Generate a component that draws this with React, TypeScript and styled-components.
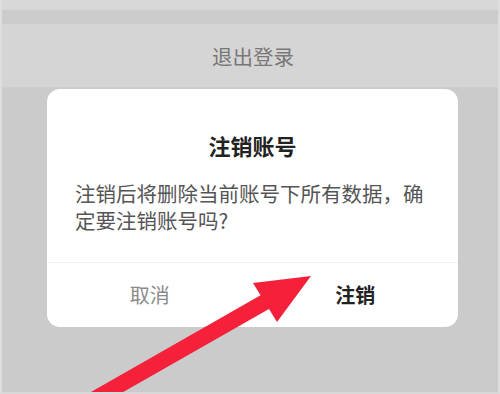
import React from "react";
import styled, { createGlobalStyle } from "styled-components";

const GlobalStyle = createGlobalStyle`
  html, body {
    margin: 0;
    padding: 0;
    background: #cbcbcb;
  }
  body {
    font-family: "Noto Sans CJK SC", "Noto Sans", sans-serif;
  }
`;

export default function App() {
  return (
    <>
      <GlobalStyle />
      <Screen>
        <TopStrip />
        <StripGap />
        <MenuRow>退出登录</MenuRow>
        <Overlay>
          <Dialog>
            <Title>注销账号</Title>
            <Message>注销后将删除当前账号下所有数据，确定要注销账号吗?</Message>
            <Actions>
              <ActionButton>取消</ActionButton>
              <ActionButton $primary>注销</ActionButton>
            </Actions>
          </Dialog>
        </Overlay>
        <Arrow viewBox="0 0 500 394" width="500" height="394">
          <line x1="58" y1="420" x2="272" y2="298" stroke="#f5213b" strokeWidth="16" />
          <polygon points="311,276 253,283 277,322" fill="#f5213b" />
        </Arrow>
      </Screen>
    </>
  );
}

const Screen = styled.div`
  position: relative;
  width: 500px;
  height: 394px;
  overflow: hidden;
  background: #cbcbcb;
  box-sizing: border-box;
  border-left: 2px solid #dedede;
  border-right: 2px solid #dedede;
  border-bottom: 2px solid #d8d8d8;
  display: flex;
  flex-flow: column nowrap;
`;

const TopStrip = styled.div`
  height: 10px;
  background: #d8d8d8;
`;

const StripGap = styled.div`
  height: 14px;
  background: #cccccc;
`;

const MenuRow = styled.div`
  height: 63px;
  background: #d5d5d5;
  border-bottom: 1px solid #cfcfcf;
  display: flex;
  align-items: center;
  justify-content: center;
  padding-left: 6px;
  font-size: 20.5px;
  color: #787878;
`;

const Overlay = styled.div`
  flex: 1;
  padding: 1px 0 0 45px;
`;

const Dialog = styled.div`
  width: 411px;
  height: 238px;
  background: #ffffff;
  border-radius: 13px;
  display: flex;
  flex-flow: column nowrap;
  overflow: hidden;
`;

const Title = styled.div`
  margin-top: 42px;
  height: 28px;
  line-height: 28px;
  text-align: center;
  font-size: 22px;
  font-weight: 700;
  color: #222222;
`;

const Message = styled.div`
  margin-top: 21px;
  padding: 0 27px 0 28px;
  font-size: 20.5px;
  line-height: 27px;
  color: #555555;
  height: 54px;
`;

const Actions = styled.div`
  margin-top: 28px;
  flex: 1;
  border-top: 1px solid #f2f2f2;
  display: grid;
  grid-template-columns: 1fr 1fr;
`;

const ActionButton = styled.div<{ $primary?: boolean }>`
  display: flex;
  align-items: center;
  justify-content: center;
  padding-bottom: 2px;
  font-size: 20px;
  font-weight: ${(p) => (p.$primary ? 700 : 400)};
  color: ${(p) => (p.$primary ? "#222222" : "#8a8a8a")};
`;

const Arrow = styled.svg`
  position: absolute;
  left: -2px;
  top: 0;
  pointer-events: none;
`;
